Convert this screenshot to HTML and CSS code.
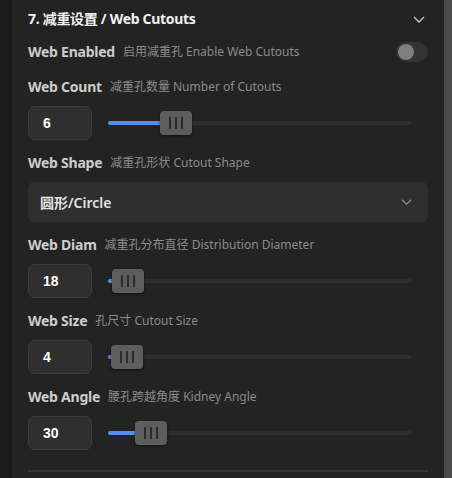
FILE: index.html
```html
<!DOCTYPE html>
<html lang="zh">
<head>
<meta charset="utf-8">
<title>Web Cutouts</title>
<link rel="stylesheet" href="styles.css">
</head>
<body>
<div class="app">
  <div class="rail"></div>
  <section class="panel">
    <header class="section-head">
      <h2 class="section-title">7. 减重设置 / Web Cutouts</h2>
      <svg class="chev chev-head" viewBox="0 0 12 7" width="12" height="7"><path d="M1 1 L6 6 L11 1" fill="none" stroke="currentColor" stroke-width="1.3"/></svg>
    </header>

    <div class="toggle-row">
      <div class="label-line"><span class="label">Web Enabled</span><span class="desc">启用减重孔 Enable Web Cutouts</span></div>
      <div class="toggle"><span class="knob"></span></div>
    </div>

    <div class="field">
      <div class="label-line"><span class="label">Web Count</span><span class="desc">减重孔数量 Number of Cutouts</span></div>
      <div class="control-row">
        <div class="num">6</div>
        <div class="slider">
          <div class="track"><div class="fill" style="width:68px"></div><div class="thumb" style="left:52px"><i></i><i></i><i></i></div></div>
        </div>
      </div>
    </div>

    <div class="field">
      <div class="label-line"><span class="label">Web Shape</span><span class="desc">减重孔形状 Cutout Shape</span></div>
      <div class="select">
        <span class="select-text">圆形/Circle</span>
        <svg class="chev chev-select" viewBox="0 0 11 6" width="11" height="6"><path d="M1 0.8 L5.5 5.2 L10 0.8" fill="none" stroke="currentColor" stroke-width="1.2"/></svg>
      </div>
    </div>

    <div class="field">
      <div class="label-line"><span class="label">Web Diam</span><span class="desc">减重孔分布直径 Distribution Diameter</span></div>
      <div class="control-row">
        <div class="num">18</div>
        <div class="slider">
          <div class="track"><div class="fill" style="width:20px"></div><div class="thumb" style="left:4px"><i></i><i></i><i></i></div></div>
        </div>
      </div>
    </div>

    <div class="field">
      <div class="label-line"><span class="label">Web Size</span><span class="desc">孔尺寸 Cutout Size</span></div>
      <div class="control-row">
        <div class="num">4</div>
        <div class="slider">
          <div class="track"><div class="fill" style="width:19px"></div><div class="thumb" style="left:3px"><i></i><i></i><i></i></div></div>
        </div>
      </div>
    </div>

    <div class="field">
      <div class="label-line"><span class="label">Web Angle</span><span class="desc">腰孔跨越角度 Kidney Angle</span></div>
      <div class="control-row">
        <div class="num">30</div>
        <div class="slider">
          <div class="track"><div class="fill" style="width:43px"></div><div class="thumb" style="left:27px"><i></i><i></i><i></i></div></div>
        </div>
      </div>
    </div>

    <div class="divider"></div>
  </section>
  <div class="scrollbar"></div>
</div>
</body>
</html>
```

FILE: styles.css
```css
* { box-sizing: border-box; }
html, body {
  margin: 0;
  padding: 0;
  height: 478px;
  overflow: hidden;
  background: #232323;
  font-family: "Noto Sans", "Noto Sans CJK SC", sans-serif;
}
.app {
  display: flex;
  height: 478px;
}
.rail {
  width: 12px;
  background: #1b1b1b;
  flex: none;
}
.scrollbar {
  width: 8px;
  background: #4b4b4b;
  flex: none;
}
.panel {
  flex: 1;
  background: #232323;
  padding: 8px 16px 0 16px;
  display: flex;
  flex-direction: column;
}
.section-head {
  height: 22px;
  display: flex;
  align-items: center;
  justify-content: space-between;
}
.section-title {
  margin: 0;
  font-size: 14px;
  font-weight: 700;
  line-height: 22px;
  letter-spacing: -0.3px;
  color: #f2f2f2;
}
.chev { display: block; }
.chev-head { color: #c8c8c8; margin-right: 3px; }
.toggle-row {
  margin-top: 10px;
  height: 24px;
  display: flex;
  align-items: center;
  justify-content: space-between;
}
.label-line {
  height: 20px;
  display: flex;
  align-items: center;
  gap: 8px;
  white-space: nowrap;
}
.label {
  font-size: 14px;
  font-weight: 700;
  color: #cdcdcd;
  line-height: 20px;
  letter-spacing: -0.25px;
}
.desc {
  font-size: 12px;
  color: #8b8b8b;
  line-height: 20px;
}
.toggle {
  width: 32px;
  height: 20px;
  border-radius: 10px;
  background: #333333;
  display: flex;
  align-items: center;
  padding-left: 2px;
}
.knob {
  width: 16px;
  height: 16px;
  border-radius: 50%;
  background: #7e7e7e;
}
.field {
  margin-top: 13px;
  display: flex;
  flex-direction: column;
  gap: 9px;
}
.control-row {
  display: flex;
  align-items: center;
  gap: 16px;
  height: 34px;
}
.num {
  width: 64px;
  height: 34px;
  flex: none;
  border: 1px solid #3b3b3b;
  border-radius: 7px;
  background: #2f2f2f;
  color: #ffffff;
  font-family: "Liberation Sans", Arial, sans-serif;
  font-weight: 700;
  font-size: 14px;
  line-height: 32px;
  padding-left: 14px;
}
.slider {
  flex: 1;
  padding-right: 16px;
  display: flex;
  align-items: center;
  height: 34px;
}
.track {
  position: relative;
  width: 100%;
  height: 4px;
  border-radius: 2px;
  background: #2e2e2e;
}
.fill {
  position: absolute;
  left: 0;
  top: 0;
  height: 4px;
  border-radius: 2px;
  background: #4f8ef2;
}
.thumb {
  position: absolute;
  top: -10px;
  width: 32px;
  height: 24px;
  border-radius: 4px;
  background: #5d5d5d;
  box-shadow: 0 1px 3px rgba(0, 0, 0, 0.55);
  display: flex;
  align-items: center;
  justify-content: center;
  gap: 4px;
}
.thumb i {
  display: block;
  width: 2px;
  height: 12px;
  background: #2c2c2c;
}
.select {
  height: 40px;
  border-radius: 6px;
  background: #2f2f2f;
  display: flex;
  align-items: center;
  justify-content: space-between;
  padding: 0 16px 0 12px;
}
.select-text {
  font-size: 14px;
  font-weight: 600;
  color: #e2e2e2;
}
.chev-select { color: #8a8a8a; }
.divider {
  margin-top: 20px;
  height: 2px;
  background: #363636;
}
```
